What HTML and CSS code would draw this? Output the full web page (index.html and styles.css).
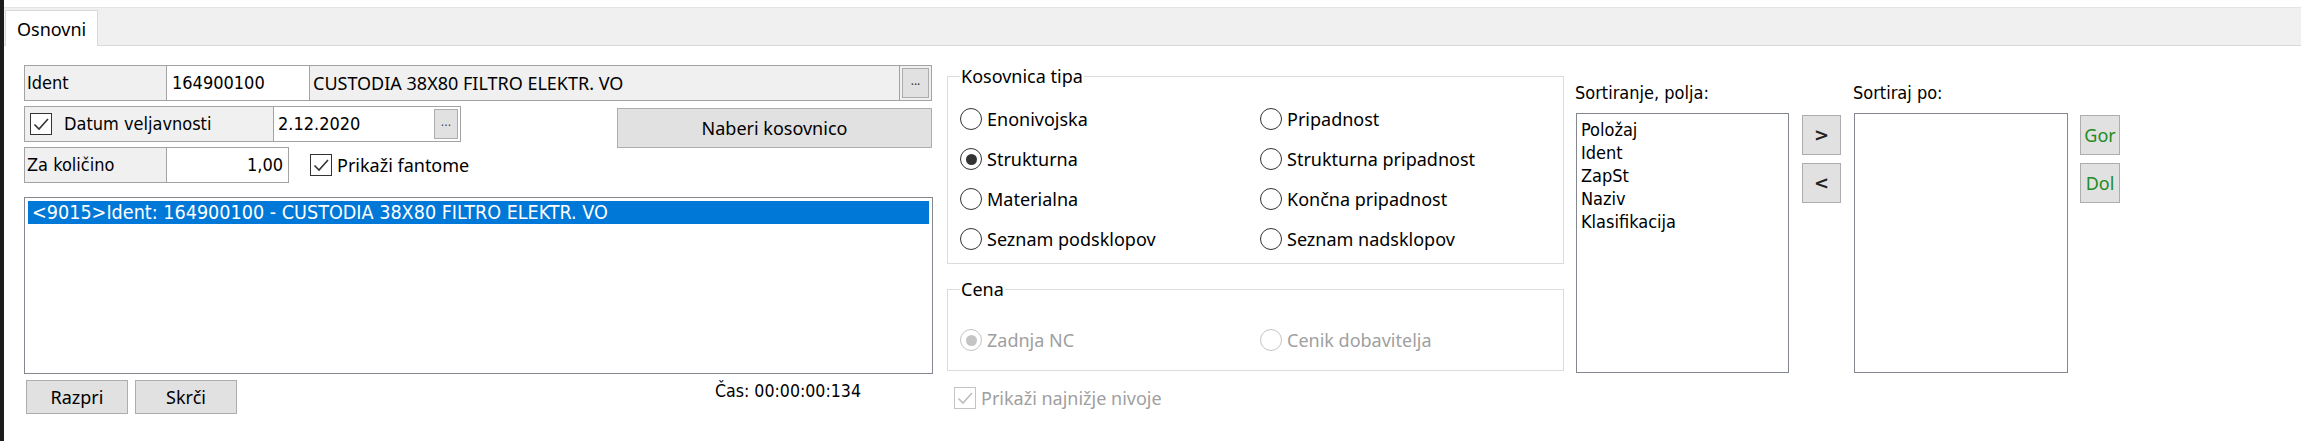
FILE: index.html
```html
<!DOCTYPE html>
<html lang="sl">
<head>
<meta charset="utf-8">
<title>Kosovnica</title>
<link rel="stylesheet" href="styles.css">
</head>
<body>
<div class="app">
  <div class="edge"></div>
  <div class="main">
    <div class="tabstrip"><div class="tab">Osnovni</div></div>
    <div class="content">
      <section class="left">
        <div class="field f-ident">
          <div class="cell lbl w-lbl t">Ident</div>
          <div class="cell val w-val t">164900100</div>
          <div class="cell lbl desc">CUSTODIA 38X80 FILTRO ELEKTR. VO</div>
          <div class="cell lbl btncell"><div class="dots">...</div></div>
        </div>
        <div class="row23">
          <div class="col23">
            <div class="field f-datum">
              <div class="cell lbl chkcell t">
                <span class="cb"><svg viewBox="0 0 22 22" width="22" height="22"><path d="M4.5 11.5 L9 16 L18 6" fill="none" stroke="#333" stroke-width="1.6"/></svg></span>
                <span class="cbtext">Datum veljavnosti</span>
              </div>
              <div class="cell val dval t">
                <span class="dtext">2.12.2020</span>
                <div class="dots mini">...</div>
              </div>
            </div>
            <div class="kolrow">
              <div class="field f-kol">
                <div class="cell lbl w-lbl t">Za količino</div>
                <div class="cell val kval t">1,00</div>
              </div>
              <label class="check fant">
                <span class="cb"><svg viewBox="0 0 22 22" width="22" height="22"><path d="M4.5 11.5 L9 16 L18 6" fill="none" stroke="#333" stroke-width="1.6"/></svg></span>
                <span>Prikaži fantome</span>
              </label>
            </div>
          </div>
          <div class="btn naberi">Naberi kosovnico</div>
        </div>
        <div class="lb">
          <div class="sel t">&lt;9015&gt;Ident: 164900100 - CUSTODIA 38X80 FILTRO ELEKTR. VO</div>
        </div>
        <div class="bbar">
          <div class="btn rbtn">Razpri</div>
          <div class="btn rbtn second">Skrči</div>
          <div class="cas t">Čas: 00:00:00:134</div>
        </div>
      </section>

      <section class="mid">
        <fieldset class="grp kos">
          <legend>Kosovnica tipa</legend>
          <div class="rgrid">
            <div class="radio"><span class="rc"></span><span>Enonivojska</span></div>
            <div class="radio"><span class="rc"></span><span>Pripadnost</span></div>
            <div class="radio"><span class="rc on"></span><span>Strukturna</span></div>
            <div class="radio"><span class="rc"></span><span>Strukturna pripadnost</span></div>
            <div class="radio"><span class="rc"></span><span>Materialna</span></div>
            <div class="radio"><span class="rc"></span><span>Končna pripadnost</span></div>
            <div class="radio"><span class="rc"></span><span>Seznam podsklopov</span></div>
            <div class="radio"><span class="rc"></span><span>Seznam nadsklopov</span></div>
          </div>
        </fieldset>
        <fieldset class="grp cena">
          <legend>Cena</legend>
          <div class="rgrid">
            <div class="radio dis"><span class="rc on"></span><span>Zadnja NC</span></div>
            <div class="radio dis"><span class="rc"></span><span>Cenik dobavitelja</span></div>
          </div>
        </fieldset>
        <label class="check dis najn">
          <span class="cb"><svg viewBox="0 0 22 22" width="22" height="22"><path d="M4.5 11.5 L9 16 L18 6" fill="none" stroke="#bdbdbd" stroke-width="1.6"/></svg></span>
          <span>Prikaži najnižje nivoje</span>
        </label>
      </section>

      <section class="sort">
        <div class="scol">
          <div class="slabel t">Sortiranje, polja:</div>
          <div class="slist a t">
            <div>Položaj</div>
            <div>Ident</div>
            <div>ZapSt</div>
            <div>Naziv</div>
            <div>Klasifikacija</div>
          </div>
        </div>
        <div class="sbtns">
          <div class="btn sq arrow">&gt;</div>
          <div class="btn sq arrow">&lt;</div>
        </div>
        <div class="scol b">
          <div class="slabel t">Sortiraj po:</div>
          <div class="slist b t"></div>
        </div>
        <div class="sbtns b">
          <div class="btn sq green">Gor</div>
          <div class="btn sq green">Dol</div>
        </div>
      </section>
    </div>
  </div>
</div>
</body>
</html>
```

FILE: styles.css
```css
* { box-sizing: border-box; }
html, body { margin: 0; padding: 0; }
body {
  width: 2301px;
  height: 441px;
  overflow: hidden;
  background: #ffffff;
  font-family: "Noto Sans", "Open Sans", sans-serif;
  font-size: 18px;
  line-height: 22px;
  color: #000000;
}
.t {
  font-family: "DejaVu Sans Condensed", "DejaVu Sans", sans-serif;
  font-size: 18px;
}
.app { display: flex; height: 441px; }
.edge { width: 4px; flex: none; background: #1b1b1b; }
.main { flex: 1; display: flex; flex-direction: column; }

.tabstrip {
  margin-top: 7px;
  height: 39px;
  background: #f0f0f0;
  border-top: 1px solid #e3e3e3;
  border-bottom: 1px solid #d9d9d9;
  display: flex;
  align-items: flex-end;
}
.tab {
  margin-left: 1px;
  width: 93px;
  height: 36px;
  margin-bottom: -1px;
  background: #ffffff;
  border: 1px solid #d9d9d9;
  border-bottom: none;
  padding-left: 11px;
  display: flex;
  align-items: center;
}

.content {
  flex: 1;
  display: flex;
  align-items: flex-start;
  padding: 19px 0 0 20px;
}

/* left */
.left { width: 909px; flex: none; display: flex; flex-direction: column; }
.field { display: flex; height: 36px; }
.cell {
  height: 100%;
  border: 1px solid #a3a3a3;
  display: flex;
  align-items: center;
  white-space: nowrap;
}
.cell + .cell { margin-left: -1px; }
.lbl { background: #f0f0f0; padding-left: 2px; }
.val { background: #ffffff; }
.f-ident { width: 908px; }
.w-lbl { width: 143px; flex: none; }
.w-val { width: 144px; flex: none; padding-left: 5px; }
.desc { flex: 1; padding-left: 3px; }
.btncell { width: 33px; flex: none; padding: 2px; }
.dots {
  width: 100%;
  height: 100%;
  background: #e1e1e1;
  border: 1px solid #adadad;
  display: flex;
  align-items: center;
  justify-content: center;
  font-size: 12px;
  line-height: 12px;
  color: #333;
  padding-bottom: 4px;
}
.row23 { display: flex; margin-top: 5px; align-items: flex-start; }
.col23 { display: flex; flex-direction: column; gap: 5px; }
.f-datum { width: 437px; }
.chkcell { width: 250px; flex: none; padding-left: 5px; }
.cb {
  width: 22px;
  height: 22px;
  flex: none;
  border: 1px solid #333333;
  background: #ffffff;
  display: block;
}
.cb svg { display: block; margin: -1px; }
.cbtext { margin-left: 12px; }
.dval { width: 188px; flex: none; padding: 2px 2px 2px 4px; }
.dtext { flex: 1; }
.dots.mini { width: 24px; flex: none; }
.kolrow { display: flex; align-items: center; }
.f-kol { width: 265px; }
.kval { width: 123px; flex: none; justify-content: flex-end; padding-right: 5px; }
.check { display: flex; align-items: center; gap: 5px; white-space: nowrap; }
.fant { margin-left: 21px; }

.btn {
  background: #e1e1e1;
  border: 1px solid #adadad;
  display: flex;
  align-items: center;
  justify-content: center;
  white-space: nowrap;
}
.naberi { margin-left: auto; margin-right: 1px; margin-top: 2px; width: 315px; height: 40px; }

.lb {
  margin-top: 14px;
  height: 177px;
  width: 909px;
  border: 1px solid #828790;
  padding: 3px;
}
.sel {
  height: 23px;
  line-height: 23px;
  background: #0078d7;
  color: #ffffff;
  padding-left: 4px;
  white-space: nowrap;
  font-size: 19.6px;
}
.bbar { display: flex; align-items: flex-start; margin-top: 6px; }
.rbtn { width: 102px; height: 34px; margin-left: 2px; }
.rbtn.second { margin-left: 7px; }
.cas { margin-left: 478px; white-space: nowrap; font-size: 17.6px; }

/* middle */
.mid { width: 617px; flex: none; margin-left: 14px; }
.grp {
  margin: 1px 0 0 0;
  padding: 13px 0 4px 12px;
  border: 1px solid #dcdcdc;
  min-width: 0;
}
.grp legend { padding: 0 1px; line-height: 20px; }
.rgrid {
  display: grid;
  grid-template-columns: 300px 1fr;
  grid-auto-rows: 40px;
  align-items: center;
}
.radio { display: flex; align-items: center; gap: 5px; white-space: nowrap; }
.rc {
  width: 22px;
  height: 22px;
  flex: none;
  border-radius: 50%;
  border: 1px solid #333333;
  background: #ffffff;
  display: flex;
  align-items: center;
  justify-content: center;
}
.rc.on::after {
  content: "";
  width: 11px;
  height: 11px;
  border-radius: 50%;
  background: #333333;
}
.grp.cena { margin-top: 15px; padding: 21px 0 10px 12px; }
.dis { color: #a0a0a0; }
.dis .rc { border-color: #c4c4c4; }
.dis .rc.on::after { background: #c4c4c4; }
.dis .cb { border-color: #c4c4c4; }
.najn { margin-top: 16px; margin-left: 7px; }

/* sort */
.sort { display: flex; flex: none; margin-left: 11px; }
.scol { display: flex; flex-direction: column; }
.slabel { margin-top: 17px; line-height: 22px; white-space: nowrap; }
.slist {
  margin-top: 9px;
  margin-left: 1px;
  height: 260px;
  width: 213px;
  border: 1px solid #828790;
  padding: 4px 4px;
  line-height: 23px;
}
.slist.b { width: 214px; }
.sbtns { display: flex; flex-direction: column; gap: 8px; margin-top: 50px; margin-left: 13px; }
.sbtns.b { margin-left: 12px; }
.scol.b { margin-left: 12px; }
.sq { width: 39px; height: 40px; }
.sbtns.b .sq { width: 40px; }
.arrow { font-family: "DejaVu Sans", sans-serif; font-weight: bold; font-size: 18px; color: #222; }
.green { color: #228b22; }
```
